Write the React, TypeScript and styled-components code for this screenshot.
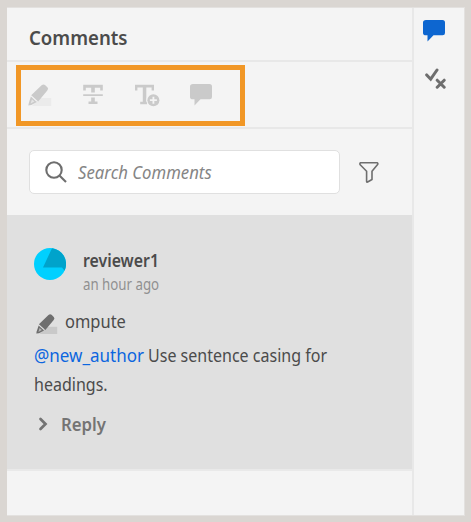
import React from 'react';
import styled, { createGlobalStyle } from 'styled-components';

const Global = createGlobalStyle`
  * { box-sizing: border-box; }
  html, body { margin: 0; padding: 0; }
  body { background: #dad6d2; font-family: "Noto Sans", "Open Sans", sans-serif; color: #4b4b4b; }
`;

const Frame = styled.div`
  width: 471px; height: 522px; padding: 7px 6px 6px 7px; background: #dad6d2; overflow: hidden;
`;
const Panel = styled.div`
  display: flex; width: 458px; height: 509px; background: #f4f4f4;
  border: solid #e3e1df; border-width: 1px 1px 1px 0;
`;
const Main = styled.main`
  width: 407px; border-right: 2px solid #e8e8e8; display: flex; flex-direction: column;
`;
/* Condenses a run of text horizontally by the given ratio. */
const Narrow = styled.span<{ $ratio: number }>`
  display: inline-block; white-space: nowrap;
  transform: scaleX(${(p) => p.$ratio}); transform-origin: 0 50%;
`;
const Header = styled.header`
  height: 54px; padding: 14px 0 0 22px; border-bottom: 2px solid #e8e8e8;
`;
const Title = styled.h1`
  margin: 0; font-size: 20px; line-height: 32px; font-weight: 600;
`;
const Toolbar = styled.div`
  height: 67px; padding: 3px 0 0 9px; border-bottom: 2px solid #e8e8e8;
`;
const ToolGroup = styled.div`
  width: 229px; height: 61px; border: 5px solid #f19726; display: flex; padding: 13px 0 0 7px; gap: 30px;
`;
const Tool = styled.button`
  border: 0; padding: 0; width: 24px; height: 24px; background: none; color: #cacaca;
  svg { display: block; }
`;
const SearchRow = styled.div`
  height: 86px; padding: 21px 0 0 22px; display: flex; gap: 18px;
`;
const SearchBox = styled.div`
  width: 311px; height: 44px; border: 1px solid #e0e0e0; border-radius: 5px; background: #fff;
  display: flex; align-items: center; padding-left: 15px; gap: 11px; color: #6e6e6e;
`;
const Placeholder = styled(Narrow)`
  font-size: 18px; line-height: 24px; font-style: italic; color: #858585;
`;
const Filter = styled.button`
  border: 0; padding: 0; width: 24px; height: 44px; background: none; color: #6e6e6e;
  display: flex; align-items: center;
`;
const Comment = styled.article`
  height: 256px; background: #e0e0e0; border-bottom: 2px solid #e9e9e9; padding: 33px 0 0 27px;
`;
const Author = styled.div`
  display: flex; gap: 17px; height: 57px;
`;
const AuthorText = styled.div`
  display: flex; flex-direction: column;
`;
const Name = styled(Narrow)`
  font-size: 18px; line-height: 25px; font-weight: 600;
`;
const Time = styled(Narrow)`
  font-size: 16px; line-height: 23px; color: #909090;
`;
const Quote = styled.div`
  display: flex; gap: 7px; height: 36px; font-size: 18px; line-height: 32px; padding-left: 2px;
  svg { margin-top: 8px; }
`;
const Body = styled.div`
  font-size: 18px; line-height: 29px;
`;
const Line = styled.div`
  display: flex; height: 29px;
`;
const Mention = styled(Narrow)`
  color: #0c66df; width: 114px;
`;
const Reply = styled.div`
  display: flex; align-items: center; gap: 11px; margin-top: 10px; padding-left: 3px; height: 29px;
  color: #747474; font-size: 18px; font-weight: 600;
`;
const Rail = styled.aside`
  flex: 1; padding: 11px 0 0 9px; display: flex; flex-direction: column; gap: 25px;
`;
const RailButton = styled(Tool)`
  color: #0d66d0;
`;
const RailIcon = styled.svg`
  margin-left: 2px;
`;

const Highlighter = ({ size = 24, tone = '#cacaca', base = '#ebebeb' }: { size?: number; tone?: string; base?: string }) => (
  <svg width={size} height={size} viewBox="0 0 24 24">
    <path d="M11 15H23.2v8H4z" fill={base} />
    <path d="M3.2 12.2 13.6 2.2Q15.4.9 17 2l2.4 2.3Q20.9 5.7 19.3 7.6L10.2 18.6z" fill={tone} />
    <path d="M2.9 13.6 8.8 19 3.3 22 .3 22.4.8 20z" fill={tone} />
    <path d="M3.9 16.3 6.4 18.6 2.6 20.6z" fill={base} opacity=".8" />
  </svg>
);
const Strike = () => (
  <svg width="24" height="24" viewBox="1 0 24 24" fill="currentColor">
    <path d="M2.2 1.7h19.6v5.8h-2.6V4.8h-5.4v4.7h-3.6V4.8H4.8v2.7H2.2zM2.2 11.3h19.6v1.6H2.2zM10.2 14.6h3.6v4h2.7v2.5H7.5v-2.5h2.7z" />
  </svg>
);
const AddText = () => (
  <svg width="26" height="24" viewBox="1 0 26 24" fill="currentColor" overflow="visible">
    <path d="M0 1.7h19v5.8h-2.4V4.6h-5.3v14.1h.8v2.5H5.2v-2.5h2.6V4.6H2.4v2.9H0z" />
    <circle cx="18.4" cy="17.2" r="7" fill="#f4f4f4" />
    <circle cx="18.4" cy="17.2" r="6" />
    <path d="M18.4 13.7v7M14.9 17.2h7" stroke="#f4f4f4" strokeWidth="1.8" />
  </svg>
);
const Bubble = () => (
  <svg width="24" height="24" viewBox="0 0 24 24" fill="currentColor">
    <path d="M3 1h16.5Q22 1 22 3.5v10.5q0 2.3-2.5 2.3h-9L4.5 22.5v-6.2H3Q0 16.3 0 14V3.5Q0 1 3 1Z" />
  </svg>
);
const CheckCross = () => (
  <RailIcon width="22" height="22" viewBox="0 0 22 22" fill="none" stroke="#6e6e6e" strokeWidth="3" strokeLinecap="round">
    <path d="m1.7 6.9 4 4.3L12 2M12.2 12.2l7 7M19.2 12.2l-7 7" />
  </RailIcon>
);
const Avatar = () => (
  <svg width="32" height="32" viewBox="0 0 32 32">
    <circle cx="16" cy="16" r="16" fill="#00d0ff" />
    <path d="M18 .2A16 16 0 0 1 30.6 22.8L28 19.5H9z" fill="#00a3cb" />
  </svg>
);

export default function App() {
  return (
    <>
      <Global />
      <Frame>
        <Panel>
          <Main>
            <Header><Title><Narrow $ratio={0.93}>Comments</Narrow></Title></Header>
            <Toolbar>
              <ToolGroup>
                <Tool aria-label="Highlight"><Highlighter /></Tool>
                <Tool aria-label="Strikethrough"><Strike /></Tool>
                <Tool aria-label="Insert text"><AddText /></Tool>
                <Tool aria-label="Add comment"><Bubble /></Tool>
              </ToolGroup>
            </Toolbar>
            <SearchRow>
              <SearchBox>
                <svg width="22" height="22" viewBox="0 0 22 22" fill="none" stroke="currentColor" strokeWidth="2.1">
                  <circle cx="9" cy="9" r="7.7" /><path d="m14.4 14.4 6.6 6.6" />
                </svg>
                <Placeholder $ratio={0.93}>Search Comments</Placeholder>
              </SearchBox>
              <Filter aria-label="Filter">
                <svg width="22" height="22" viewBox="0 0 22 22" fill="none" stroke="currentColor" strokeWidth="1.6" strokeLinejoin="round">
                  <path d="M2.6 1.8h16.8q1 .8 0 2L14 10.3v8.2L9.6 21q-1 .4-1-.7v-10L2.2 3.8q-.8-1.4.4-2Z" />
                </svg>
              </Filter>
            </SearchRow>
            <Comment>
              <Author>
                <Avatar />
                <AuthorText>
                  <Name $ratio={0.88}>reviewer1</Name>
                  <Time $ratio={0.83}>an hour ago</Time>
                </AuthorText>
              </Author>
              <Quote>
                <Highlighter size={22} tone="#6e6e6e" base="#c9c9c9" />
                <Narrow $ratio={0.915}>ompute</Narrow>
              </Quote>
              <Body>
                <Line>
                  <Mention $ratio={0.945}>@new_author</Mention>
                  <Narrow $ratio={0.89}>Use sentence casing for</Narrow>
                </Line>
                <Line><Narrow $ratio={0.89}>headings.</Narrow></Line>
              </Body>
              <Reply>
                <svg width="13" height="14" viewBox="0 0 13 14" fill="none" stroke="currentColor" strokeWidth="2.7" strokeLinecap="round">
                  <path d="m3.5 2 5 5-5 5" />
                </svg>
                <Narrow $ratio={0.93}>Reply</Narrow>
              </Reply>
            </Comment>
          </Main>
          <Rail>
            <RailButton aria-label="Comments"><Bubble /></RailButton>
            <CheckCross />
          </Rail>
        </Panel>
      </Frame>
    </>
  );
}
